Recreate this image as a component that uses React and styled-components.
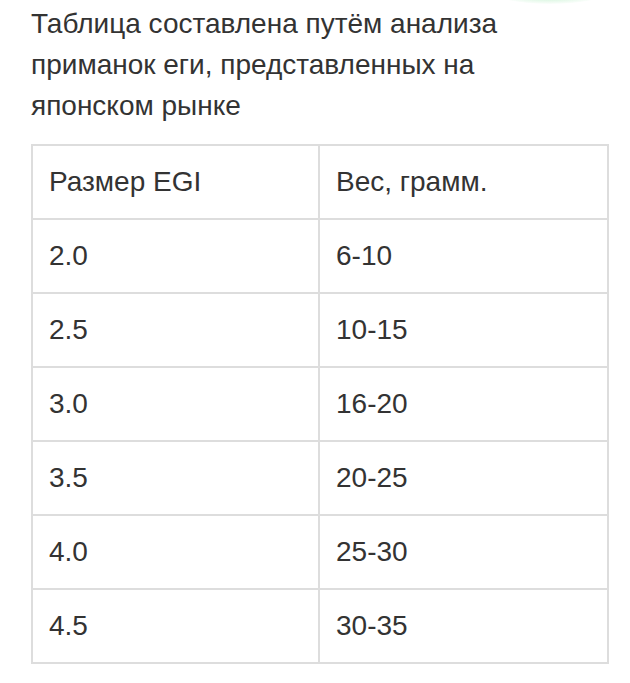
import React from 'react';
import styled, { createGlobalStyle } from 'styled-components';

const GlobalStyle = createGlobalStyle`
  html, body {
    margin: 0;
    padding: 0;
    background: #fff;
  }
  body {
    font-family: "Liberation Sans", Arial, sans-serif;
    color: #333;
  }
`;

const Page = styled.div`
  position: relative;
  width: 630px;
  height: 683px;
  padding: 3px 21px 0 31px;
  box-sizing: border-box;
  overflow: hidden;
`;

// faint green edge of an image above the crop
const Glow = styled.div`
  position: absolute;
  top: -14px;
  left: 500px;
  width: 100px;
  height: 18px;
  border-radius: 50%;
  background: radial-gradient(ellipse at center, rgba(120, 220, 140, 0.55) 0%, rgba(170, 235, 185, 0.3) 45%, rgba(255, 255, 255, 0) 75%);
`;

const Intro = styled.p`
  margin: 0 0 18px;
  max-width: 540px;
  font-size: 28px;
  line-height: 41px;
  color: #333;
`;

const Table = styled.table`
  width: 578px;
  border-collapse: collapse;
  table-layout: fixed;
`;

const Cell = styled.td`
  border: 2px solid #dddddd;
  height: 74px;
  padding: 0 16px;
  box-sizing: border-box;
  font-size: 28px;
  color: #333;
  vertical-align: middle;
  width: ${(p) => p.$w || 'auto'};
`;

const rows = [
  ['2.0', '6-10'],
  ['2.5', '10-15'],
  ['3.0', '16-20'],
  ['3.5', '20-25'],
  ['4.0', '25-30'],
  ['4.5', '30-35'],
];

export default function App() {
  return (
    <Page>
      <GlobalStyle />
      <Glow />
      <Intro>Таблица составлена путём анализа приманок еги, представленных на японском рынке</Intro>
      <Table>
        <tbody>
          <tr>
            <Cell $w="287px">Размер EGI</Cell>
            <Cell>Вес, грамм.</Cell>
          </tr>
          {rows.map(([size, weight]) => (
            <tr key={size}>
              <Cell>{size}</Cell>
              <Cell>{weight}</Cell>
            </tr>
          ))}
        </tbody>
      </Table>
    </Page>
  );
}
